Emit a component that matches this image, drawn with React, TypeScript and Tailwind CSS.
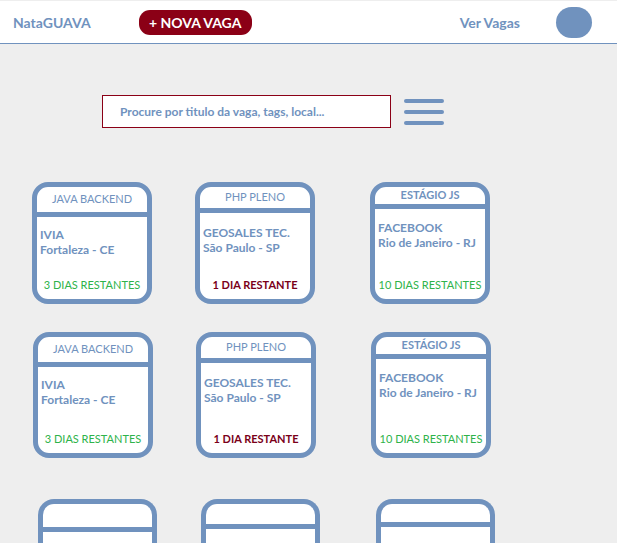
type Vaga = {
  title: string;
  titleBold?: boolean;
  company: string;
  city: string;
  remaining: string;
  urgent?: boolean;
};

const vagas: Vaga[] = [
  { title: 'JAVA BACKEND', company: 'IVIA', city: 'Fortaleza - CE', remaining: '3 DIAS RESTANTES' },
  { title: 'PHP PLENO', company: 'GEOSALES TEC.', city: 'São Paulo - SP', remaining: '1 DIA RESTANTE', urgent: true },
  { title: 'ESTÁGIO JS', titleBold: true, company: 'FACEBOOK', city: 'Rio de Janeiro - RJ', remaining: '10 DIAS RESTANTES' },
];

const headerHeights = ['h-[30px]', 'h-[26px]', 'h-[22px]'];
const bodyTops = ['mt-[10px]', 'mt-[12px]', 'mt-[11px]'];
const cardOffsets = ['ml-[32px]', 'ml-[43px]', 'ml-[55px]'];

const VagaCard = ({ vaga, index, tall }: { vaga: Vaga; index: number; tall?: boolean }) => (
  <div
    className={`${cardOffsets[index]} flex w-[120px] ${tall ? 'h-[126px]' : 'h-[122px]'} flex-col overflow-hidden rounded-[16px] border-[5px] border-[#7092be] bg-white`}
  >
    <div
      className={`${headerHeights[index]} flex shrink-0 items-center justify-center border-b-[5px] border-[#7092be] text-[11px] text-[#7092be] ${vaga.titleBold ? 'font-bold' : ''}`}
    >
      {vaga.title}
    </div>
    <div className={`${bodyTops[index]} px-[3px] text-[12px] font-bold leading-[15px] text-[#7092be]`}>
      <div>{vaga.company}</div>
      <div>{vaga.city}</div>
    </div>
    <div className="mt-auto mb-[6px] text-center text-[11px]">
      {vaga.urgent ? (
        <span className="font-bold text-[#7a0019]">{vaga.remaining}</span>
      ) : (
        <span className="text-[#2eb34a]">{vaga.remaining}</span>
      )}
    </div>
  </div>
);

const EmptyCard = ({ index }: { index: number }) => (
  <div
    className={`${['ml-[38px]', 'ml-[44px]', 'ml-[56px]'][index]} h-[60px] w-[119px] overflow-hidden rounded-t-[16px] border-x-[5px] border-t-[5px] border-[#7092be] bg-white`}
  >
    <div className={`${['h-[28px]', 'h-[25px]', 'h-[23px]'][index]} border-b-[5px] border-[#7092be]`} />
  </div>
);

export default function App() {
  return (
    <div
      className="h-[543px] overflow-hidden bg-[#eeeeee]"
      style={{ fontFamily: 'Lato, "Open Sans", sans-serif' }}
    >
      <header className="flex h-[44px] items-center border-t border-b border-t-[#eeeeee] border-b-[#7092be] bg-white">
        <span className="ml-[13px] text-[14px] font-bold text-[#7092be]">NataGUAVA</span>
        <button className="ml-[48px] flex h-[25px] w-[113px] items-center justify-center rounded-[11px] bg-[#8b0016] text-[14px] font-bold text-white">
          + NOVA VAGA
        </button>
        <span className="ml-auto text-[14px] font-bold text-[#7092be]">Ver Vagas</span>
        <span className="ml-[36px] mr-[25px] h-[31px] w-[36px] rounded-full bg-[#7092be]" />
      </header>

      <div className="mt-[51px] flex items-center">
        <div className="ml-[102px] flex h-[33px] w-[289px] items-center border border-[#8b0016] bg-white pl-[17px] text-[12px] font-bold text-[#7092be]">
          Procure por titulo da vaga, tags, local...
        </div>
        <div className="ml-[13px] flex flex-col gap-[7px]">
          <span className="h-[4px] w-[40px] rounded-full bg-[#7092be]" />
          <span className="h-[4px] w-[40px] rounded-full bg-[#7092be]" />
          <span className="h-[4px] w-[40px] rounded-full bg-[#7092be]" />
        </div>
      </div>

      <div className="mt-[54px] flex">
        {vagas.map((v, i) => (
          <VagaCard key={v.title} vaga={v} index={i} />
        ))}
      </div>

      <div className="mt-[28px] flex pl-px">
        {vagas.map((v, i) => (
          <VagaCard key={v.title} vaga={v} index={i} tall />
        ))}
      </div>

      <div className="mt-[41px] flex">
        {[0, 1, 2].map((i) => (
          <EmptyCard key={i} index={i} />
        ))}
      </div>
    </div>
  );
}
